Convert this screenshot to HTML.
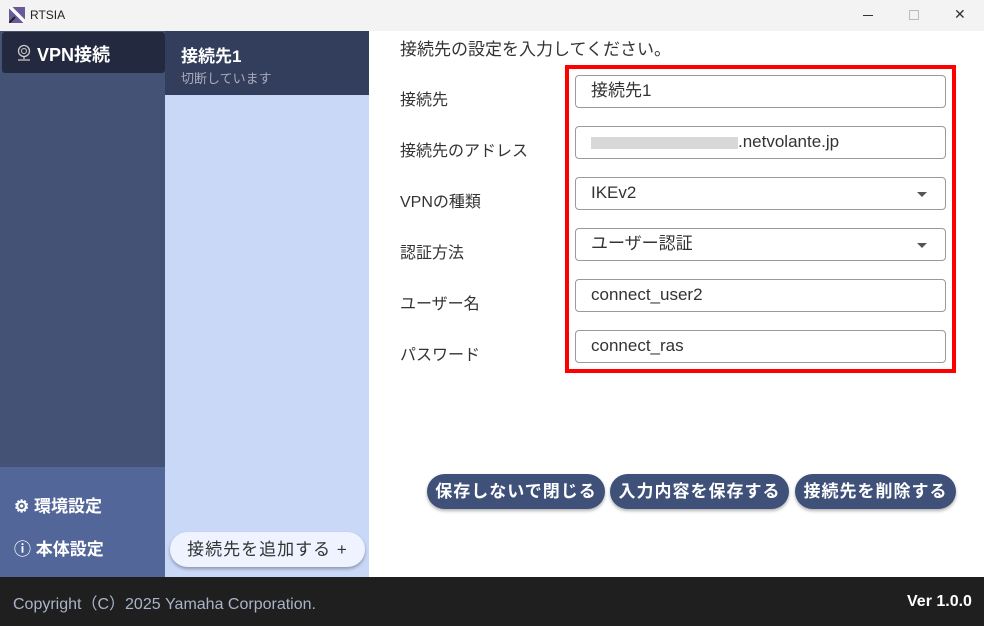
<!DOCTYPE html>
<html><head><meta charset="utf-8"><style>
*{margin:0;padding:0;box-sizing:border-box}
body{width:984px;height:626px;overflow:hidden;font-family:"Liberation Sans","Noto Sans CJK JP",sans-serif;background:#fff;position:relative}
.a{position:absolute}
.tb{left:0;top:0;width:984px;height:31px;background:#f3f3f3;font-size:12px;color:#222}
.in{left:575px;width:371px;height:33px;border:1px solid #9a9a9a;border-radius:4px;font-size:17px;color:#333;padding-left:15px;line-height:30px}
.lb{left:400px;font-size:16px;color:#333}
.btn{top:474px;height:35px;background:#3f5179;color:#fff;border-radius:18px;font-size:17px;font-weight:bold;text-align:center;line-height:35px;box-shadow:0 2px 3px rgba(0,0,0,.3);letter-spacing:1px}
.car{position:absolute;right:18px;top:14px;border-left:5px solid transparent;border-right:5px solid transparent;border-top:5px solid #555}
</style></head><body>
<div class="a tb">
<svg class="a" style="left:9px;top:7px" width="16" height="16"><rect width="16" height="16" fill="#6a5a9a"/><path d="M0 0L16 16M2 0L16 14" stroke="#fff" stroke-width="2"/><path d="M0 16L6 10" stroke="#222" stroke-width="2"/></svg>
<span class="a" style="left:30px;top:8px">RTSIA</span>
<div class="a" style="left:863px;top:15px;width:10px;height:1px;background:#333"></div>
<div class="a" style="left:909px;top:10px;width:10px;height:10px;border:1px solid #bbb"></div>
<span class="a" style="left:954px;top:6px;font-size:14px;color:#333">✕</span>
</div>
<div class="a" style="left:0;top:31px;width:165px;height:436px;background:#435275"></div>
<div class="a" style="left:0;top:467px;width:165px;height:110px;background:#52669a"></div>
<div class="a" style="left:2px;top:32px;width:163px;height:41px;background:#232a3f;border-radius:3px"></div>
<svg class="a" style="left:15px;top:44px" width="18" height="18"><circle cx="9" cy="7" r="5.5" fill="none" stroke="#ccc" stroke-width="1.3"/><circle cx="9" cy="7" r="2.5" fill="none" stroke="#ccc"/><path d="M9 13v2M3 16h12" stroke="#ccc" stroke-width="1.3"/></svg>
<span class="a" style="left:37px;top:41px;font-size:18px;font-weight:bold;color:#fff">VPN接続</span>
<span class="a" style="left:14px;top:492px;font-size:17px;font-weight:bold;color:#fff">⚙ 環境設定</span>
<span class="a" style="left:14px;top:535px;font-size:17px;font-weight:bold;color:#fff">ⓘ 本体設定</span>
<div class="a" style="left:165px;top:31px;width:204px;height:64px;background:#323e5c"></div>
<div class="a" style="left:165px;top:95px;width:204px;height:482px;background:#c9d8f7"></div>
<span class="a" style="left:181px;top:42px;font-size:17px;font-weight:bold;color:#fff">接続先1</span>
<span class="a" style="left:181px;top:68px;font-size:13px;color:#aab">切断しています</span>
<div class="a" style="left:170px;top:532px;width:195px;height:35px;background:#eef3ff;border-radius:18px;box-shadow:0 2px 3px rgba(0,0,0,.3);font-size:17px;color:#333;line-height:35px;text-align:center;letter-spacing:1px">接続先を追加する +</div>
<span class="a" style="left:400px;top:35px;font-size:17px;color:#333">接続先の設定を入力してください。</span>
<span class="a lb" style="top:86px">接続先</span>
<span class="a lb" style="top:137px">接続先のアドレス</span>
<span class="a lb" style="top:188px">VPNの種類</span>
<span class="a lb" style="top:239px">認証方法</span>
<span class="a lb" style="top:290px">ユーザー名</span>
<span class="a lb" style="top:341px">パスワード</span>
<div class="a" style="left:565px;top:65px;width:391px;height:308px;border:4px solid #f00"></div>
<div class="a in" style="top:75px">接続先1</div>
<div class="a in" style="top:126px"><span style="display:inline-block;width:147px;height:12px;background:#d8d8d8;vertical-align:middle"></span>.netvolante.jp</div>
<div class="a in" style="top:177px">IKEv2<div class="car"></div></div>
<div class="a in" style="top:228px">ユーザー認証<div class="car"></div></div>
<div class="a in" style="top:279px">connect_user2</div>
<div class="a in" style="top:330px">connect_ras</div>
<div class="a btn" style="left:427px;width:178px">保存しないで閉じる</div>
<div class="a btn" style="left:610px;width:179px">入力内容を保存する</div>
<div class="a btn" style="left:795px;width:161px">接続先を削除する</div>
<div class="a" style="left:0;top:577px;width:984px;height:49px;background:#1f1f1f"></div>
<span class="a" style="left:13px;top:590px;font-size:16px;color:#a9b4c9">Copyright（C）2025 Yamaha Corporation.</span>
<span class="a" style="left:907px;top:593px;font-size:16px;font-weight:bold;color:#fff">Ver 1.0.0</span>
</body></html>
